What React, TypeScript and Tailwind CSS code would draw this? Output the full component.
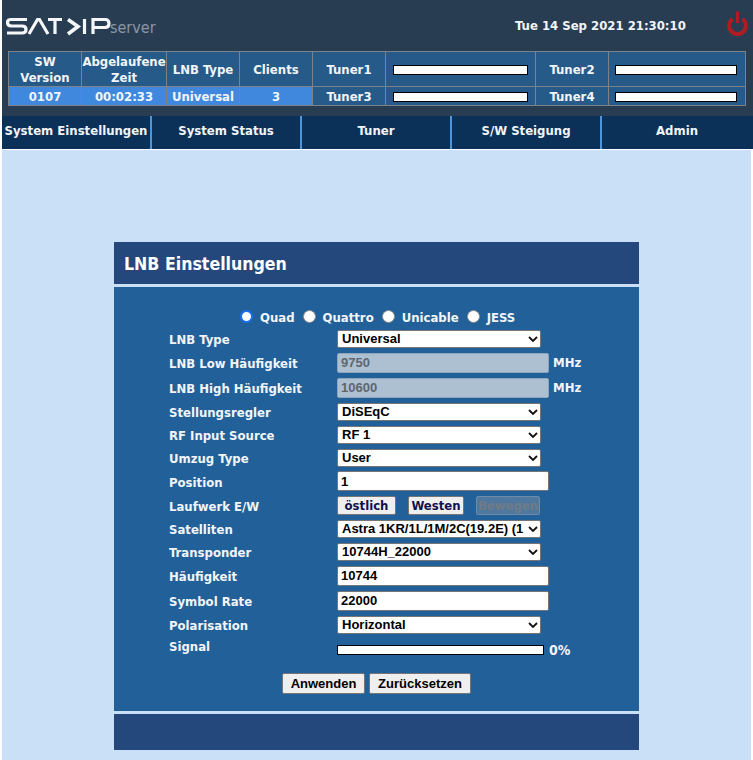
const labelFont = "font-['DejaVu_Sans_Condensed','DejaVu_Sans',Verdana,sans-serif] font-bold";
const fieldFont = "font-['Liberation_Sans',Arial,sans-serif] font-bold";

function Logo() {
  return (
    <div className="flex items-end h-[20px]">
      <svg width="105" height="20" viewBox="0 0 105 20" fill="none" stroke="#f4f6f8" strokeWidth="3.200">
        <path d="M21 3.500H5Q1.500 3.500 1.500 6.500T5 10H16Q20 10 20 13.500T16 17H1" />
        <path d="M23 18L31.500 3.500H33.500L42 18" />
        <path d="M42 3.500H56M49 3.500V18" />
        <path d="M62 3.500L72 10.500L62 18" strokeWidth="3.600" />
        <path d="M78.500 3V18" />
        <path d="M87 18V3.500H99Q103 3.500 103 7.500T99 11.500H87" />
      </svg>
      <span className="font-['DejaVu_Sans_Condensed','DejaVu_Sans',sans-serif] text-[16px] font-medium leading-none text-[#8b97a3] -ml-[1px]">server</span>
    </div>
  );
}

function PowerIcon() {
  return (
    <svg width="21" height="25" viewBox="0 0 21 25" fill="none" stroke="#b01c22" strokeWidth="4">
      <path d="M5.500 8A8.400 8.400 0 1 0 15.500 8" />
      <path d="M10.500 0.500V12" strokeWidth="3" />
    </svg>
  );
}

function Bar({ width }: { width: string }) {
  return <div className={`${width} h-[10px] bg-white border border-black`} />;
}

function StatusTable() {
  const cell = "border border-[#7c8288] text-center px-0 pt-[2px] pb-0";
  return (
    <table className={`${labelFont} w-[737px] table-fixed border-collapse text-[13px] leading-4 text-[#f2f5f8] bg-[#265a88]`}>
      <colgroup>
        <col className="w-[73px]" />
        <col className="w-[85px]" />
        <col className="w-[73px]" />
        <col className="w-[73px]" />
        <col className="w-[73px]" />
        <col className="w-[150px]" />
        <col className="w-[73px]" />
        <col className="w-[137px]" />
      </colgroup>
      <tbody>
        <tr className="h-[35px]">
          <td className={cell}>SW Version</td>
          <td className={`${cell} whitespace-nowrap`}>Abgelaufene<br />Zeit</td>
          <td className={cell}>LNB Type</td>
          <td className={cell}>Clients</td>
          <td className={cell}>Tuner1</td>
          <td className={cell}><div className="flex justify-center"><Bar width="w-[135px]" /></div></td>
          <td className={cell}>Tuner2</td>
          <td className={cell}><div className="flex justify-center pr-[2px]"><Bar width="w-[122px]" /></div></td>
        </tr>
        <tr className="h-[19px]">
          <td className={`${cell} bg-[#3f88dd]`}>0107</td>
          <td className={`${cell} bg-[#3f88dd]`}>00:02:33</td>
          <td className={`${cell} bg-[#3f88dd]`}>Universal</td>
          <td className={`${cell} bg-[#3f88dd]`}>3</td>
          <td className={cell}>Tuner3</td>
          <td className={cell}><div className="flex justify-center"><Bar width="w-[135px]" /></div></td>
          <td className={cell}>Tuner4</td>
          <td className={cell}><div className="flex justify-center pr-[2px]"><Bar width="w-[122px]" /></div></td>
        </tr>
      </tbody>
    </table>
  );
}

const navItems = ["System Einstellungen", "System Status", "Tuner", "S/W Steigung", "Admin"];

function Nav() {
  return (
    <div className={`${labelFont} flex h-[33px] bg-[#0b3159] text-[13px] text-[#f2f5f8]`}>
      {navItems.map((item, i) => (
        <div
          key={item}
          className={`flex items-center justify-center w-[150px] whitespace-nowrap pb-[4px] ${i < 4 ? "border-r-2 border-[#4f95dc]" : ""}`}
        >
          {item}
        </div>
      ))}
    </div>
  );
}

function Row({ label, h, children, labelPad = "pt-[2px]" }: { label: string; h: string; children: React.ReactNode; labelPad?: string }) {
  return (
    <div className={`flex items-center ${h}`}>
      <div className={`${labelFont} w-[168px] text-[13px] text-[#f2f5f8] whitespace-nowrap ${labelPad}`}>{label}</div>
      <div className="flex items-center">{children}</div>
    </div>
  );
}

function Select({ value }: { value: string }) {
  return (
    <div className={`${fieldFont} relative w-[204px] h-[18px] bg-white border border-[#767676] rounded-[2px] text-[13px] leading-4 text-black pl-[4px] overflow-hidden whitespace-nowrap`}>
      {value}
      <div className="absolute right-0 top-0 h-full w-[14px] flex items-center justify-center">
        <svg width="10" height="6" viewBox="0 0 10 6" fill="none" stroke="#111" strokeWidth="1.800">
          <path d="M1 1L5 5L9 1" />
        </svg>
      </div>
    </div>
  );
}

function Field({ value, disabled }: { value: string; disabled?: boolean }) {
  return (
    <input
      readOnly
      disabled={disabled}
      value={value}
      className={`${fieldFont} w-[212px] h-[20px] px-[3px] rounded-[2px] border text-[13px] outline-none ${
        disabled ? "bg-[#adc0d2] border-[#8fa5ba] text-[#5f666e]" : "bg-white border-[#767676] text-black"
      }`}
    />
  );
}

function SmallButton({ label, disabled }: { label: string; disabled?: boolean }) {
  return (
    <button
      disabled={disabled}
      className={`${labelFont} h-[19px] rounded-[2px] border text-[13px] leading-none ${
        disabled ? "bg-[#4f789e] border-[#6b8cab] text-[#6f7b86]" : "bg-[#efefef] border-[#767676] text-[#10124f]"
      }`}
    >
      {label}
    </button>
  );
}

function Radio({ label, checked }: { label: string; checked?: boolean }) {
  return (
    <label className="flex items-center gap-[7px]">
      <span className={`-mt-[3px] w-[13px] h-[13px] rounded-full bg-white ${checked ? "border-[2.5px] border-[#1a6ff0]" : "border border-[#8a8a8a]"}`} />
      <span>{label}</span>
    </label>
  );
}

export default function App() {
  return (
    <div className="w-[753px] h-[760px] overflow-hidden bg-white pl-[2px]">
      <div className="bg-[#293d52] h-[149px] pt-[10px]">
        <div className="flex items-start h-[41px]">
          <div className="ml-[4px] mt-[6px] w-[300px]"><Logo /></div>
          <div className={`${labelFont} ml-[209px] mt-[6px] w-[172px] text-[13px] text-[#f2f5f8] whitespace-nowrap`}>Tue 14 Sep 2021 21:30:10</div>
          <div className="ml-[40px] mt-[1px]"><PowerIcon /></div>
        </div>
        <div className="ml-[6px]"><StatusTable /></div>
        <div className="mt-[10px]"><Nav /></div>
      </div>

      <div className="mt-[1px] w-[749px] h-[610px] bg-[#cae0f6] pt-[92px] pl-[112px]">
        <div className="w-[525px]">
          <div className={`${labelFont} h-[42px] bg-[#24487b] text-white text-[17.600px] flex items-center pl-[10px] pt-[2px]`}>LNB Einstellungen</div>
          <div className="mt-[3px] h-[424px] bg-[#22609a] pt-[23px] pl-[55px]">
            <div className={`${labelFont} flex gap-[8px] pl-[71px] text-[13px] leading-4 text-[#f2f5f8] h-[16px] mb-[1px]`}>
              <Radio label="Quad" checked />
              <Radio label="Quattro" />
              <Radio label="Unicable" />
              <Radio label="JESS" />
            </div>
            <Row label="LNB Type" h="h-[23px]"><Select value="Universal" /></Row>
            <Row label="LNB Low Häufigkeit" h="h-[25px]">
              <Field value="9750" disabled />
              <span className={`${labelFont} ml-[4px] text-[13px] text-[#f2f5f8]`}>MHz</span>
            </Row>
            <Row label="LNB High Häufigkeit" h="h-[25px]">
              <Field value="10600" disabled />
              <span className={`${labelFont} ml-[4px] text-[13px] text-[#f2f5f8]`}>MHz</span>
            </Row>
            <Row label="Stellungsregler" h="h-[23px]"><Select value="DiSEqC" /></Row>
            <Row label="RF Input Source" h="h-[23px]"><Select value="RF 1" /></Row>
            <Row label="Umzug Type" h="h-[23px]"><Select value="User" /></Row>
            <Row label="Position" h="h-[24px] mb-[1px]" labelPad="pt-[4px]"><Field value="1" /></Row>
            <Row label="Laufwerk E/W" h="h-[23px]">
              <div className="flex gap-[12px]">
                <div className="w-[59px] flex flex-col"><SmallButton label="östlich" /></div>
                <div className="w-[56px] flex flex-col"><SmallButton label="Westen" /></div>
                <div className="w-[64px] flex flex-col"><SmallButton label="Bewegen" disabled /></div>
              </div>
            </Row>
            <Row label="Satelliten" h="h-[23px]"><Select value="Astra 1KR/1L/1M/2C(19.2E) (1" /></Row>
            <Row label="Transponder" h="h-[23px]"><Select value="10744H_22000" /></Row>
            <Row label="Häufigkeit" h="h-[25px]"><Field value="10744" /></Row>
            <Row label="Symbol Rate" h="h-[25px]"><Field value="22000" /></Row>
            <Row label="Polarisation" h="h-[23px]"><Select value="Horizontal" /></Row>
            <div className="flex h-[23px] items-center">
              <div className={`${labelFont} w-[168px] text-[13px] text-[#f2f5f8] -mt-[2px]`}>Signal</div>
              <div className="mt-[5px]"><Bar width="w-[207px]" /></div>
              <span className={`${labelFont} ml-[5px] mt-[5px] text-[14px] text-[#f2f5f8]`}>0%</span>
            </div>
            <div className={`${fieldFont} flex justify-center gap-[4px] mr-[55px] mt-[14px] text-[13px] text-black`}>
              <button className="h-[21px] w-[83px] bg-[#efefef] border border-[#767676] rounded-[2px]">Anwenden</button>
              <button className="h-[21px] w-[102px] bg-[#efefef] border border-[#767676] rounded-[2px]">Zurücksetzen</button>
            </div>
          </div>
          <div className="mt-[3px] h-[36px] bg-[#24487b]" />
        </div>
      </div>
    </div>
  );
}
